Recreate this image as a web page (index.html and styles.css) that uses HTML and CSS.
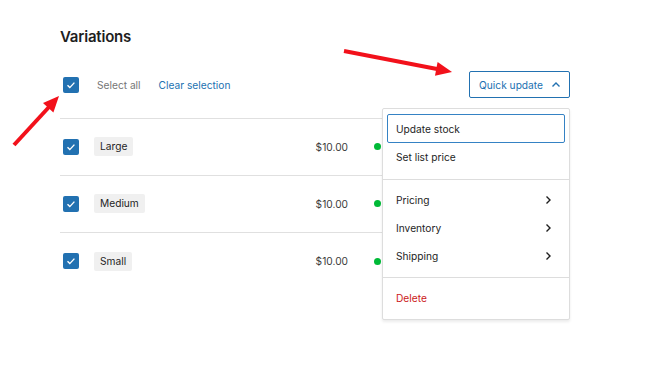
FILE: index.html
```html
<!DOCTYPE html>
<html lang="en">
<head>
    <meta charset="UTF-8">
    <meta name="viewport" content="width=device-width, initial-scale=1.0">
    <title>Variations</title>
    <link rel="stylesheet" href="styles.css">
</head>
<body>
    <div class="panel">
        <h2 class="title">Variations</h2>

        <div class="toolbar">
            <span class="check"><svg viewBox="0 0 16 16"><path d="M4.5 8.3l2.3 2.3 4.6-5"/></svg></span>
            <span class="muted">Select all</span>
            <a class="link" href="#">Clear selection</a>
            <div class="toolbar-end">
                <button class="quick">Quick update
                    <svg class="chev" viewBox="0 0 10 10"><path d="M1.5 6.5L5 3l3.5 3.5"/></svg>
                </button>
                <div class="menu">
                    <div class="menu-group">
                        <div class="menu-item is-focused">Update stock</div>
                        <div class="menu-item">Set list price</div>
                    </div>
                    <div class="menu-group">
                        <div class="menu-item">Pricing <svg class="chev" viewBox="0 0 10 10"><path d="M3.5 1.5L7 5 3.5 8.5"/></svg></div>
                        <div class="menu-item">Inventory <svg class="chev" viewBox="0 0 10 10"><path d="M3.5 1.5L7 5 3.5 8.5"/></svg></div>
                        <div class="menu-item">Shipping <svg class="chev" viewBox="0 0 10 10"><path d="M3.5 1.5L7 5 3.5 8.5"/></svg></div>
                    </div>
                    <div class="menu-group">
                        <div class="menu-item danger">Delete</div>
                    </div>
                </div>
            </div>
        </div>

        <div class="rows">
            <div class="row">
                <span class="check"><svg viewBox="0 0 16 16"><path d="M4.5 8.3l2.3 2.3 4.6-5"/></svg></span>
                <span class="badge">Large</span>
                <span class="price">$10.00</span>
                <span class="dot"></span>
            </div>
            <div class="row">
                <span class="check"><svg viewBox="0 0 16 16"><path d="M4.5 8.3l2.3 2.3 4.6-5"/></svg></span>
                <span class="badge">Medium</span>
                <span class="price">$10.00</span>
                <span class="dot"></span>
            </div>
            <div class="row">
                <span class="check"><svg viewBox="0 0 16 16"><path d="M4.5 8.3l2.3 2.3 4.6-5"/></svg></span>
                <span class="badge">Small</span>
                <span class="price">$10.00</span>
                <span class="dot"></span>
            </div>
        </div>
    </div>

    <!-- annotation arrows -->
    <svg class="arrows" viewBox="0 0 650 392">
        <line x1="14" y1="145" x2="49" y2="107"/>
        <polygon points="59,96 53.4,112.5 43,103.1"/>
        <line x1="344" y1="51" x2="437" y2="69"/>
        <polygon points="452,72 437.6,62.1 435,75.8"/>
    </svg>
</body>
</html>
```

FILE: styles.css
```css
* {
    box-sizing: border-box;
}
body {
    margin: 0;
    min-height: 100vh;
    position: relative;
    font-family: Inter, "Noto Sans", sans-serif;
    font-size: 10.2px;
    color: #1e1e1e;
    background: #fff;
}
.panel {
    width: 570px;
    padding: 27px 0 0 60px;
}
.title {
    margin: 0 0 24px;
    font-size: 15px;
    line-height: 20px;
    font-weight: 600;
    letter-spacing: -0.2px;
}
.check {
    display: inline-flex;
    width: 16px;
    height: 16px;
    border-radius: 2px;
    background: #2271b1;
    flex-shrink: 0;
}
.check svg {
    width: 16px;
    height: 16px;
    fill: none;
    stroke: #fff;
    stroke-width: 1.4;
}
.toolbar {
    display: flex;
    align-items: center;
    height: 27px;
    padding-left: 3px;
    margin-bottom: 20px;
}
.muted {
    margin-left: 18px;
    color: #757575;
}
.link {
    margin-left: 18px;
    color: #2271b1;
    text-decoration: none;
}
.toolbar-end {
    margin-left: auto;
    position: relative;
}
.quick {
    display: flex;
    align-items: center;
    gap: 8px;
    height: 27px;
    padding: 0 8px 0 9px;
    border: 1px solid #2271b1;
    border-radius: 2px;
    background: #fff;
    color: #2271b1;
    font: inherit;
    white-space: nowrap;
}
.chev {
    width: 10px;
    height: 10px;
    fill: none;
    stroke: currentColor;
    stroke-width: 1.4;
}
.menu {
    position: absolute;
    top: 37px;
    right: 0;
    z-index: 10;
    width: 188px;
    background: #fff;
    border: 1px solid #ddd;
    border-radius: 2px;
    box-shadow: 0 2px 3px rgba(0, 0, 0, 0.08);
}
.menu-group {
    padding: 6px 4px 7px;
}
.menu-group:first-child {
    padding: 5px 4px 8px;
}
.menu-group + .menu-group {
    border-top: 1px solid #ddd;
}
.menu-item {
    display: flex;
    align-items: center;
    justify-content: space-between;
    height: 28px;
    padding: 0 11px 0 8px;
    border: 1px solid transparent;
    border-radius: 2px;
    color: #1e1e1e;
}
.menu-item.is-focused {
    height: 29px;
    border: 1.5px solid #3582c4;
}
.menu-item.danger {
    color: #cc1818;
}
.rows {
    border-top: 1px solid #e0e0e0;
}
.row {
    display: flex;
    align-items: center;
    height: 57px;
    padding: 0 189px 1px 3px;
    border-bottom: 1px solid #e0e0e0;
}
.row:last-child {
    border-bottom: none;
}
.badge {
    margin-left: 15px;
    padding: 0 6px;
    line-height: 19px;
    background: #f0f0f0;
    border-radius: 2px;
}
.price {
    margin-left: auto;
    color: #3c3c3c;
}
.dot {
    width: 7px;
    height: 7px;
    margin-left: 26px;
    border-radius: 50%;
    background: #00ba37;
}
.arrows {
    position: absolute;
    top: 0;
    left: 0;
    width: 650px;
    height: 392px;
    pointer-events: none;
}
.arrows line {
    stroke: #f2111b;
    stroke-width: 4;
}
.arrows polygon {
    fill: #f2111b;
}
```
